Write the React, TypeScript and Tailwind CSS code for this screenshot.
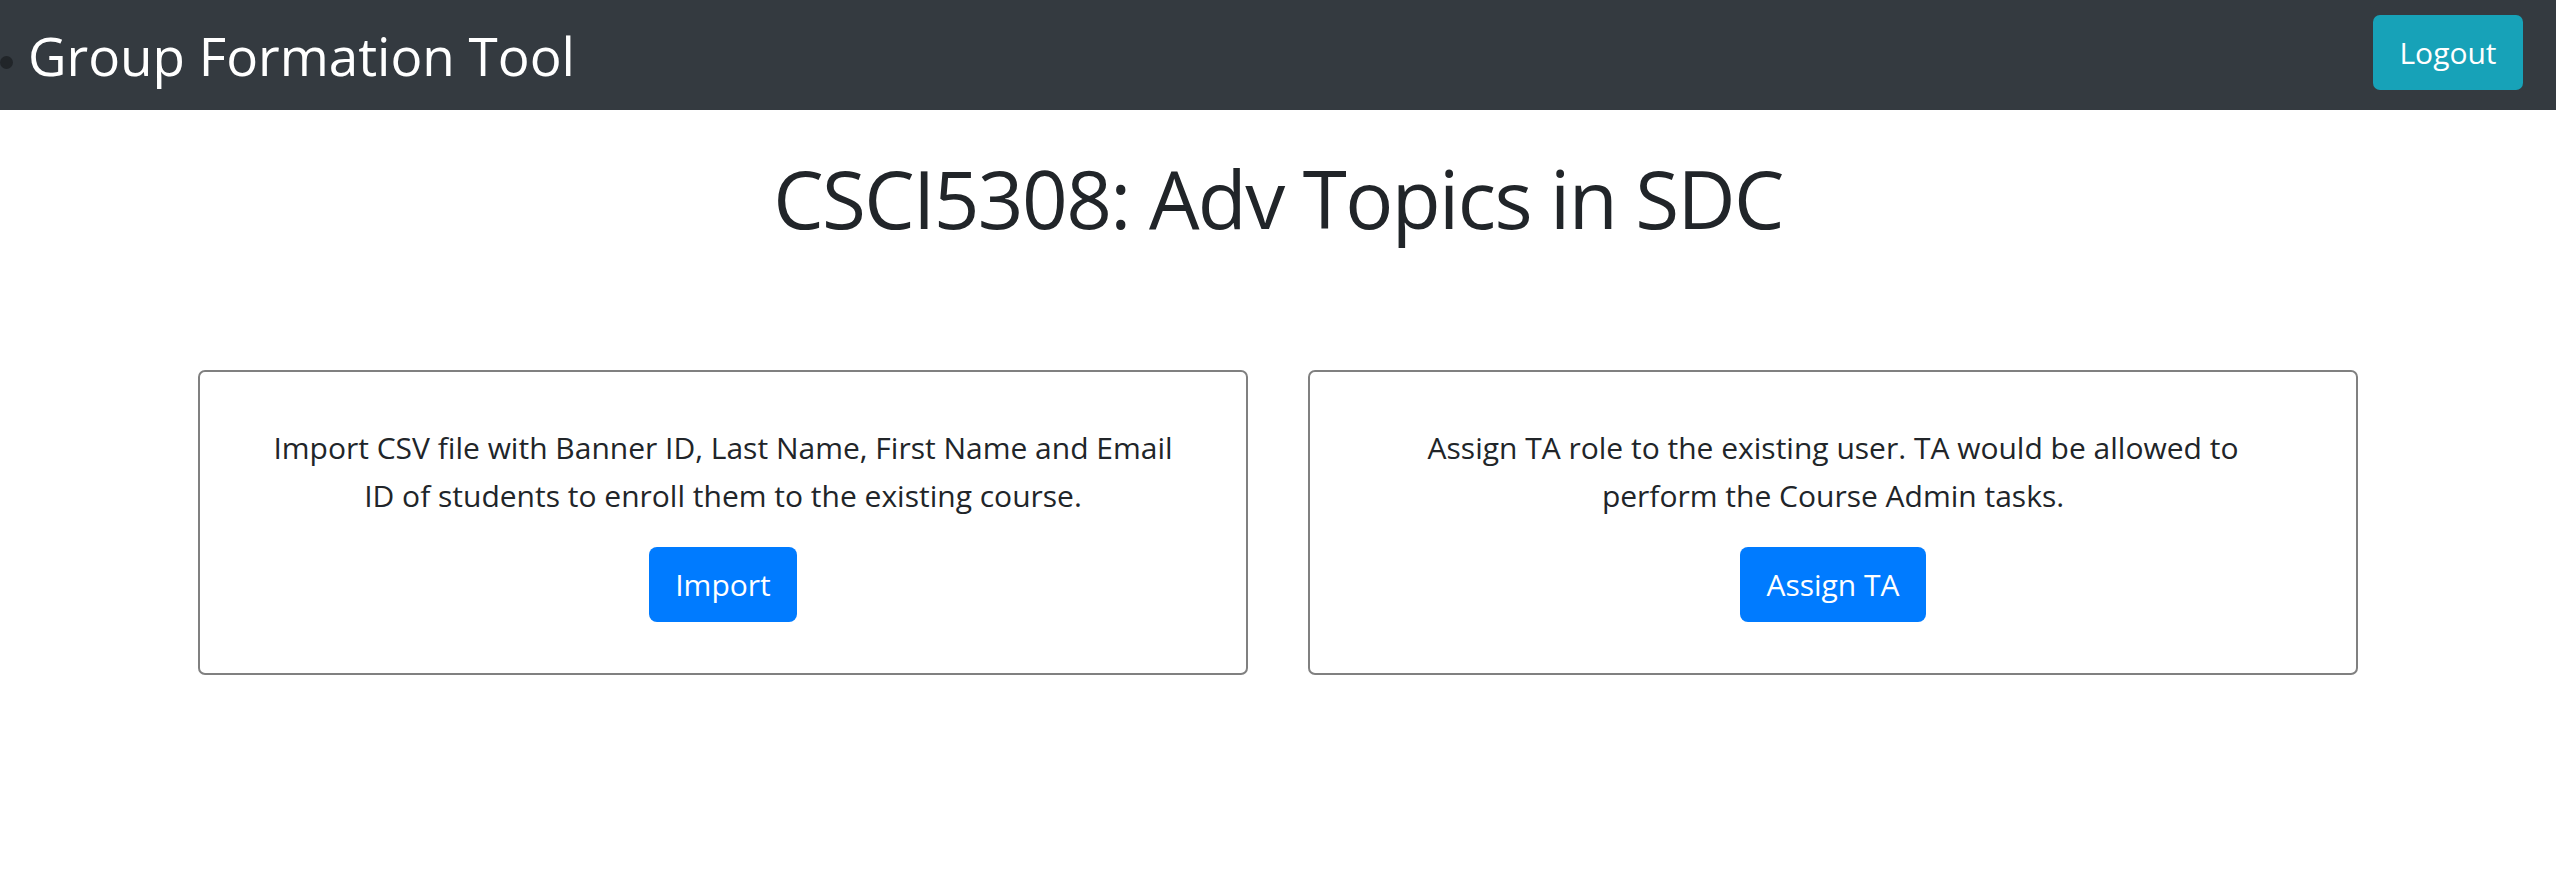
const font = { fontFamily: '"Open Sans", "Noto Sans", sans-serif' };

const Card = ({ text, action }: { text: string; action: string }) => {
  return (
    <div className="border-2 border-[#808080] rounded-[7px] h-[305px] px-[58px] pt-[52px] flex flex-col items-center">
      <p className="text-center text-[30px] leading-[48px] text-[#212529]">{text}</p>
      <button className="mt-[27px] h-[75px] px-[26px] rounded-[8px] bg-[#007bff] text-white text-[30px]">
        {action}
      </button>
    </div>
  );
};

export default function App() {
  return (
    <div className="min-h-[896px] bg-white" style={font}>
      <nav className="h-[110px] bg-[#343a40] flex justify-between pr-[33px]">
        <div className="flex items-center">
          <span className="w-[13px] h-[13px] rounded-full bg-[#212529] mt-[14px]" />
          <span className="ml-[15px] text-white text-[53px] leading-none">Group Formation Tool</span>
        </div>
        <button className="mt-[15px] w-[150px] h-[75px] rounded-[7px] bg-[#17a2b8] text-white text-[30px]">
          Logout
        </button>
      </nav>

      <h1 className="text-center text-[#212529] text-[80px] tracking-[-0.02em] leading-[120px] mt-[28px]">
        CSCI5308: Adv Topics in SDC
      </h1>

      <div className="w-[2160px] mx-auto mt-[112px] grid grid-cols-2 gap-[60px]">
        <Card
          text="Import CSV file with Banner ID, Last Name, First Name and Email ID of students to enroll them to the existing course."
          action="Import"
        />
        <Card
          text="Assign TA role to the existing user. TA would be allowed to perform the Course Admin tasks."
          action="Assign TA"
        />
      </div>
    </div>
  );
}
